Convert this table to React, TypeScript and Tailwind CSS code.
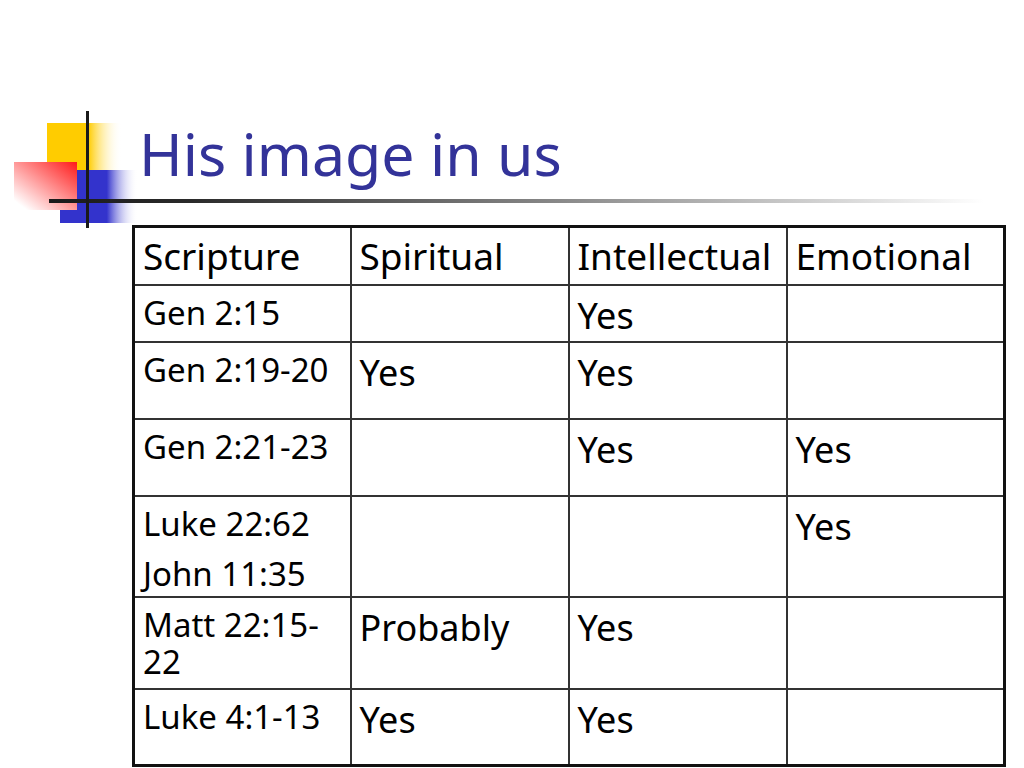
import React from 'react';

const rows: { ref: string[]; cells: string[]; h: string }[] = [
  { ref: ['Gen 2:15'], cells: ['', 'Yes', ''], h: 'h-[56px]' },
  { ref: ['Gen 2:19-20'], cells: ['Yes', 'Yes', ''], h: 'h-[77px]' },
  { ref: ['Gen 2:21-23'], cells: ['', 'Yes', 'Yes'], h: 'h-[77px]' },
  { ref: ['Luke 22:62', 'John 11:35'], cells: ['', '', 'Yes'], h: 'h-[101px]' },
  { ref: ['Matt 22:15-22'], cells: ['Probably', 'Yes', ''], h: 'h-[92px]' },
  { ref: ['Luke 4:1-13'], cells: ['Yes', 'Yes', ''], h: 'h-[77px]' },
];

const Decoration = () => (
  <svg
    className="absolute left-0 top-[100px] pointer-events-none"
    width="1024"
    height="135"
    viewBox="0 100 1024 135"
  >
    <defs>
      <linearGradient id="yel" x1="0" y1="0" x2="1" y2="0">
        <stop offset="0" stopColor="#ffcc00" />
        <stop offset="0.55" stopColor="#ffcc00" />
        <stop offset="1" stopColor="#ffffff" stopOpacity="0" />
      </linearGradient>
      <linearGradient id="blu" x1="0" y1="0" x2="1" y2="0">
        <stop offset="0" stopColor="#3333cc" />
        <stop offset="0.6" stopColor="#3333cc" />
        <stop offset="1" stopColor="#ffffff" stopOpacity="0" />
      </linearGradient>
      <linearGradient id="red" x1="1" y1="0" x2="0" y2="1">
        <stop offset="0" stopColor="#ff1a1a" />
        <stop offset="0.9" stopColor="#ffffff" />
      </linearGradient>
      <linearGradient id="bar" x1="0" y1="0" x2="1" y2="0">
        <stop offset="0" stopColor="#1a1a1a" />
        <stop offset="0.15" stopColor="#2a2a2a" />
        <stop offset="0.55" stopColor="#8a8a8a" />
        <stop offset="1" stopColor="#ffffff" />
      </linearGradient>
    </defs>
    <rect x="47" y="123" width="75" height="48" fill="url(#yel)" />
    <rect x="60" y="170" width="78" height="53" fill="url(#blu)" />
    <rect x="14" y="162" width="63" height="48" fill="url(#red)" />
    <rect x="49" y="199" width="935" height="4" fill="url(#bar)" />
    <rect x="86" y="111" width="3" height="117" fill="#1a1a1a" />
  </svg>
);

export default function App() {
  return (
    <div
      className="relative w-[1024px] h-[768px] bg-white overflow-hidden"
      style={{ fontFamily: 'Tahoma, "Noto Sans", "DejaVu Sans", sans-serif' }}
    >
      <Decoration />
      <div className="relative pl-[132px] pt-[123px]">
        <h1 className="pl-[7px] text-[59px] leading-[60px] text-[#333399] font-normal">
          His image in us
        </h1>
        <table className="mt-[42px] w-[871px] table-fixed border-collapse border-[3px] border-[#111] text-black">
          <colgroup>
            <col className="w-[217px]" />
            <col className="w-[218px]" />
            <col className="w-[218px]" />
            <col className="w-[218px]" />
          </colgroup>
          <thead>
            <tr className="h-[58px]">
              {['Scripture', 'Spiritual', 'Intellectual', 'Emotional'].map((t) => (
                <th
                  key={t}
                  className="border-2 border-[#333] px-[8px] pt-[4px] align-top text-left font-normal text-[37px] leading-[47px] whitespace-nowrap"
                >
                  {t}
                </th>
              ))}
            </tr>
          </thead>
          <tbody>
            {rows.map((r, i) => (
              <tr key={i} className={r.h}>
                <td className="border-2 border-[#333] px-[8px] pt-[8px] align-top text-[33px] leading-[37px]">
                  {r.ref.map((l, k) => (
                    <div key={l} className={k > 0 ? 'mt-[13px]' : ''}>
                      {l}
                    </div>
                  ))}
                </td>
                {r.cells.map((c, j) => (
                  <td
                    key={j}
                    className="border-2 border-[#333] px-[8px] pt-[5px] align-top text-[36px] leading-[50px]"
                  >
                    {c}
                  </td>
                ))}
              </tr>
            ))}
          </tbody>
        </table>
      </div>
    </div>
  );
}
